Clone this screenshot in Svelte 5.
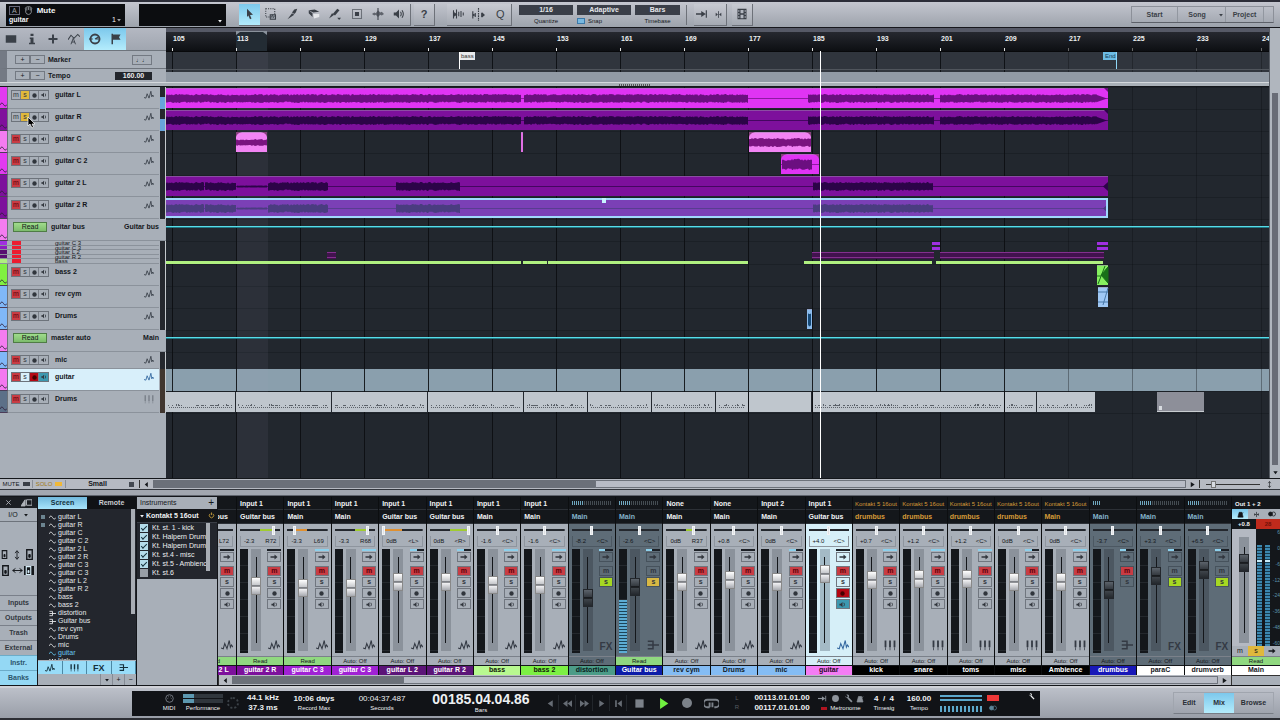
<script lang="ts">
	type Seg = [number, number, number?]; // from, to, amplitude
	type Clip = { from: number; to: number; fill: string; wave?: string; segs?: Seg[]; fade?: boolean; line?: boolean; tail?: 'taper' | 'notch' };
	type Track = {
		name: string;
		color: string;
		kind?: 'audio' | 'bus' | 'midi';
		out?: string;
		muted?: boolean;
		solo?: boolean;
		armed?: boolean;
		selected?: boolean;
		short?: boolean;
		level?: boolean;
		clips?: Clip[];
	};

	const PX_PER_BAR = 8.0075;
	let windowWidth = $state(1280);
	const barX = (bar: number) => Math.floor(6 + (bar - 105) * PX_PER_BAR);
	// One grid line every 8 bars, enough to fill the window
	const bars = $derived(Array.from({ length: Math.ceil((windowWidth - 178) / 64) }, (_, i) => 105 + i * 8));
	const loopFrom = barX(113);
	const loopTo = barX(117);

	// Small deterministic noise so the waveforms never change between renders
	function noise(n: number) {
		const v = Math.sin(n * 12.9898) * 43758.5453;
		return v - Math.floor(v);
	}

	function wavePath(segs: Seg[], mid: number) {
		let d = '';
		for (const [a, b, amp = 4] of segs) {
			let top = `M${a} ${mid}`;
			let bottom = '';
			for (let x = a; x <= b; x++) {
				const up = amp * (0.75 + 0.4 * noise(x));
				const down = amp * (0.75 + 0.4 * noise(x + 500));
				top += `L${x} ${(mid - up).toFixed(1)}`;
				bottom = `L${x} ${(mid + down).toFixed(1)}` + bottom;
			}
			d += top + bottom + 'Z';
		}
		return d;
	}

	function notePath(a: number, b: number) {
		let d = '';
		for (let x = a + 2; x < b - 3; x++) {
			const r = noise(x * 3);
			if (x % 2) d += `M${x} 16.5h1`;
			if (r > 0.6) d += `M${x} 14.5h1`;
			if (r > 0.93) d += `M${x} 13.5h1`;
		}
		return d;
	}

	const full: Seg[] = [[0, 355], [358, 582], [642, 768], [774, 931]];
	const second: Seg[] = [[0, 38], [39, 70], [71, 101, 1], [102, 162], [230, 294], [647, 767]];

	const tracks: Track[] = [
		{ name: 'guitar L', color: '#e23af0', solo: true, level: true, clips: [{ from: 0, to: 942, fill: '#e034f4', wave: '#6b0f80', segs: full, line: true, tail: 'taper' }] },
		{ name: 'guitar R', color: '#80109c', solo: true, level: true, clips: [{ from: 0, to: 942, fill: '#7d109c', wave: '#2c0448', segs: full, line: true, tail: 'taper' }] },
		{ name: 'guitar C', color: '#f47cf0', muted: true, clips: [
			{ from: 70, to: 101, fill: '#f284f4', wave: '#7a1480', segs: [[70, 101, 3]], fade: true },
			{ from: 355, to: 357, fill: '#e070e4' },
			{ from: 583, to: 645, fill: '#f284f4', wave: '#7a1480', segs: [[583, 645, 4]], fade: true }
		] },
		{ name: 'guitar C 2', color: '#e23af0', muted: true, clips: [{ from: 615, to: 653, fill: '#e034f4', wave: '#6b0f80', segs: [[616, 646, 5]], fade: true, line: true }] },
		{ name: 'guitar 2 L', color: '#7d109c', muted: true, clips: [{ from: 0, to: 942, fill: '#7d109c', wave: '#2c0448', segs: second, line: true, tail: 'notch' }] },
		{ name: 'guitar 2 R', color: '#7d109c', muted: true, clips: [{ from: 0, to: 942, fill: '#7b40b6', wave: '#4a3c80', segs: second, line: true, tail: 'notch' }] },
		{ name: 'guitar bus', color: '#f47cf0', kind: 'bus', out: 'Guitar bus' }
	];

	const lowerTracks: Track[] = [
		{ name: 'bass 2', color: '#80f040', muted: true, clips: [{ from: 931, to: 942, fill: '#86f060' }] },
		{ name: 'rev cym', color: '#80b8f8', muted: true, clips: [{ from: 932, to: 942, fill: '#a0c8f4' }] },
		{ name: 'Drums', color: '#80b8f8', muted: true, clips: [{ from: 641, to: 646, fill: '#8cbcec', wave: '#164a78', segs: [[642, 645, 6]] }] },
		{ name: 'master auto', color: '#f47cf0', kind: 'bus', out: 'Main' },
		{ name: 'mic', color: '#80b8f8', muted: true, short: true },
		{ name: 'guitar', color: '#f478f0', muted: true, armed: true, selected: true },
		{ name: 'Drums', color: '#5c7088', kind: 'midi', muted: true }
	];

	const miniTracks = [
		{ name: 'guitar C 3', color: '#a030e0' },
		{ name: 'guitar C 3', color: '#8c1cc0' },
		{ name: 'guitar L 2', color: '#581070' },
		{ name: 'guitar R 2', color: '#581070' },
		{ name: 'bass', color: '#b0f080' }
	];
	const bassParts = [[0, 355], [357, 381], [382, 582], [638, 766], [770, 937]];
	const midiParts = [[0, 69], [70, 165], [166, 261], [262, 357], [358, 421], [422, 485], [486, 549], [550, 582], [583, 645], [647, 838], [839, 870], [871, 929]];

	type Channel = {
		name: string;
		src?: string;
		out: string;
		gain: string;
		pan?: number;
		color: string;
		ink?: string;
		cap: number; // fader position, 0 at the bottom
		kind?: 'audio' | 'inst' | 'fx' | 'bus';
		read?: boolean;
		muted?: boolean;
		solo?: string;
		selected?: boolean;
		level?: number;
		send: number;
	};

	const channels: Channel[] = [
		{ name: 'guitar 2 L', src: ' ', out: 'Guitar bus', gain: '', pan: -72, color: '#7d109c', cap: 56, read: true, muted: true, send: 0 },
		{ name: 'guitar 2 R', src: 'Input 1', out: 'Guitar bus', gain: '-2.3', pan: 72, color: '#7d109c', cap: 56, read: true, muted: true, send: 0 },
		{ name: 'guitar C 3', src: 'Input 1', out: 'Main', gain: '-3.3', pan: -69, color: '#a022d4', cap: 54, read: true, muted: true, send: 14 },
		{ name: 'guitar C 3', src: 'Input 1', out: 'Main', gain: '-3.3', pan: 68, color: '#a022d4', cap: 54, muted: true, send: 14 },
		{ name: 'guitar L 2', src: 'Input 1', out: 'Guitar bus', gain: '0dB', pan: -100, color: '#5c1478', cap: 60, muted: true, send: 7 },
		{ name: 'guitar R 2', src: 'Input 1', out: 'Guitar bus', gain: '0dB', pan: 100, color: '#5c1478', cap: 60, muted: true, send: 7 },
		{ name: 'bass', src: 'Input 1', out: 'Main', gain: '-1.6', color: '#b8f890', ink: '#12200a', cap: 57, muted: true, send: 14 },
		{ name: 'bass 2', src: 'Input 1', out: 'Main', gain: '-1.6', color: '#7cf044', ink: '#12200a', cap: 57, muted: true, send: 14 },
		{ name: 'distortion', out: 'Main', gain: '-8.2', color: '#4c9c88', ink: '#0a201c', cap: 44, kind: 'fx', solo: '#a6d822', send: 6 },
		{ name: 'Guitar bus', out: 'Main', gain: '-2.6', color: '#0c1ca8', cap: 55, kind: 'bus', read: true, solo: '#d8b844', level: 53, send: 6 },
		{ name: 'rev cym', src: 'None', out: 'Main', gain: '0dB', pan: 37, color: '#84bcf4', ink: '#101a26', cap: 60, muted: true, send: 0 },
		{ name: 'Drums', src: 'None', out: 'Main', gain: '+0.8', color: '#84bcf4', ink: '#101a26', cap: 62, muted: true, send: 0 },
		{ name: 'mic', src: 'Input 2', out: 'Main', gain: '0dB', color: '#84bcf4', ink: '#101a26', cap: 60, muted: true, send: 7 },
		{ name: 'guitar', src: 'Input 1', out: 'Guitar bus', gain: '+4.0', color: '#f47cf4', ink: '#240a26', cap: 68, muted: true, selected: true, send: 0 },
		{ name: 'kick', src: 'Kontakt 5 16out', out: 'drumbus', gain: '+0.7', color: '#000', cap: 62, kind: 'inst', muted: true, send: 14 },
		{ name: 'snare', src: 'Kontakt 5 16out', out: 'drumbus', gain: '+1.2', color: '#000', cap: 63, kind: 'inst', muted: true, send: 14 },
		{ name: 'toms', src: 'Kontakt 5 16out', out: 'drumbus', gain: '+1.2', color: '#000', cap: 63, kind: 'inst', muted: true, send: 14 },
		{ name: 'misc', src: 'Kontakt 5 16out', out: 'drumbus', gain: '0dB', color: '#000', cap: 60, kind: 'inst', muted: true, send: 7 },
		{ name: 'Ambience', src: 'Kontakt 5 16out', out: 'Main', gain: '0dB', color: '#000', cap: 60, kind: 'inst', muted: true, send: 14 },
		{ name: 'drumbus', out: 'Main', gain: '-3.7', color: '#1818b8', cap: 52, kind: 'bus', muted: true, send: 6 },
		{ name: 'paraC', out: 'Main', gain: '+3.3', color: '#fff', ink: '#14171b', cap: 66, kind: 'fx', solo: '#a6d822', send: 6 },
		{ name: 'drumverb', out: 'Main', gain: '+6.5', color: '#fff', ink: '#14171b', cap: 72, kind: 'fx', solo: '#a6d822', send: 6 }
	];

	function panText(pan = 0) {
		if (pan === 0) return '<C>';
		if (Math.abs(pan) === 100) return pan < 0 ? '<L>' : '<R>';
		return (pan < 0 ? 'L' : 'R') + Math.abs(pan);
	}

	function panFill(pan = 0) {
		const pos = 50 + pan * 0.46;
		const lo = Math.min(50, pos);
		const hi = Math.max(50, pos);
		return `--lo:${lo}%;--hi:${hi}%;--tint:${pan < 0 ? '#e09030' : '#a0cc30'}`;
	}

	const bankItems = ['guitar L', 'guitar R', 'guitar C', 'guitar C 2', 'guitar 2 L', 'guitar 2 R', 'guitar C 3', 'guitar C 3', 'guitar L 2', 'guitar R 2', 'bass', 'bass 2', 'distortion', 'Guitar bus', 'rev cym', 'Drums', 'mic', 'guitar', 'kick'];
	const outputs = $state([
		{ name: 'Kt. st. 1 - kick', on: true },
		{ name: 'Kt. Halpern Drums', on: true },
		{ name: 'Kt. Halpern Drums', on: true },
		{ name: 'Kt. st.4 - misc', on: true },
		{ name: 'Kt. st.5 - Ambience', on: true },
		{ name: 'Kt. st.6', on: false }
	]);
	const editTools = ['arrow', 'range', 'split', 'erase', 'paint', 'muteTool', 'bend', 'listen'];
	const sideTabs = ['Inputs', 'Outputs', 'Trash', 'External', 'Instr.', 'Banks'];
	const navButtons = ['prev', 'rewind', 'forward', 'next', 'toStart'];
</script>

<svelte:window bind:innerWidth={windowWidth} />

{#snippet icon(name: string, size = 12)}
	<svg class="icon" width={size} height={size} viewBox="0 0 16 16" fill="none" stroke="currentColor" stroke-width="1.4" aria-hidden="true">
		{#if name === 'arrow'}
			<path d="M4 1l8 8-4 .3L10 14l-2 1-2.200-5L4 12z" fill="currentColor" stroke="none" />
		{:else if name === 'range'}
			<path d="M1 1h12v11H1z" stroke-dasharray="1.500 1.500" /><path d="M7 9h7v6H7z" fill="#9aa1aa" /><path d="M8 13l2-4 1 4 2-3" stroke-width="1" />
		{:else if name === 'split'}
			<path d="M2 15L8 7l3 2z" fill="currentColor" stroke="none" /><path d="M8 6l3-4 4-1-2 5-2 2z" fill="currentColor" stroke="none" />
		{:else if name === 'erase'}
			<path d="M1 3l8-1 6 3-8 1zM1 3v4l5 5V7z" fill="currentColor" stroke="none" /><path d="M7 8h8v4l-7 2z" fill="#e4e6ea" stroke="none" />
		{:else if name === 'paint'}
			<path d="M0 14l4-7 3 2z" fill="currentColor" stroke="none" /><path d="M5 8l6-7 3 2-6 7z" fill="currentColor" stroke="none" /><path d="M11 13h5l-2.500 3z" fill="currentColor" stroke="none" />
		{:else if name === 'muteTool'}
			<path d="M2 2h12v12H2z" opacity=".6" /><path d="M6 6h4v4H6z" fill="currentColor" />
		{:else if name === 'bend'}
			<path d="M8 0v16" /><path d="M0 8l3-2 2 1 3-4 3 3 2-1 3 3-3 2-2-1-3 3-3-3-2 1z" fill="currentColor" stroke="none" opacity=".7" />
		{:else if name === 'listen'}
			<path d="M1 6h3l4-4v12l-4-4H1z" fill="currentColor" stroke="none" /><path d="M10 5q2 3 0 6M12 3q3.500 5 0 10" />
		{:else if name === 'speaker'}
			<path d="M1 6h3l4-4v12l-4-4H1z" fill="currentColor" stroke="none" /><path d="M11 4q3 4 0 8" stroke-width="2" />
		{:else if name === 'strip'}
			<path d="M2 3v11M6 2v12M9 5v6M12 4v8M15 6v4" /><path d="M2 6l4 2.500L2 11z" fill="currentColor" />
		{:else if name === 'quant'}
			<path d="M1 4v9M4 6v5M12 6v5" /><path d="M8 0v16" stroke-dasharray="2 1" /><path d="M12 5l4 3.500-4 3.500zM1 7l4 1.500L1 10z" fill="currentColor" stroke="none" />
		{:else if name === 'film'}
			<path d="M2 1h12v14H2z" fill="currentColor" stroke="none" /><path d="M6 2.500h4v4.500H6zM6 9h4v4.500H6zM3 3h1.500v2H3zM3 7h1.500v2H3zM3 11h1.500v2H3zM11.500 3H13v2h-1.500zM11.500 7H13v2h-1.500zM11.500 11H13v2h-1.500z" fill="#b4b8c1" stroke="none" />
		{:else if name === 'flow'}
			<path d="M0 8h8" stroke-width="2" /><path d="M7 4l6 4-6 4zM13 3h1.500v10H13z" fill="currentColor" stroke="none" />
		{:else if name === 'follow'}
			<path d="M8 2v12" /><path d="M3 5l4 3-4 3zM13 5L9 8l4 3z" fill="currentColor" stroke="none" />
		{:else if name === 'list'}
			<path d="M1 3h14v10H1z" fill="currentColor" stroke="none" />
		{:else if name === 'info'}
			<path d="M6 1h4v3H6zM5 6h5v7h2v2H4v-2h2V8H5z" fill="currentColor" stroke="none" />
		{:else if name === 'plus'}
			<path d="M8 2v12M2 8h12" stroke-width="2.600" />
		{:else if name === 'auto'}
			<path d="M0 9l4-6 4 4 5-5 3 3" /><path d="M4 15l3-8 3 8M5 12h4" stroke-width="1.200" />
		{:else if name === 'dial'}
			<circle cx="8" cy="8" r="6" stroke-width="2.500" /><path d="M8 8l5-3M8 8h5M0 8h5" stroke-width="1.500" />
		{:else if name === 'hand'}
			<path d="M3 7q-2-4 1-5 4-2 8 0 3 1 1 5v4q-1 4-5 4t-5-4zM5 3v5M8 2v5M11 3v5" />
		{:else if name === 'flag'}
			<path d="M3 1v14" stroke-width="2" /><path d="M4 2h10l-2 3.500L14 9H4z" fill="currentColor" stroke="none" />
		{:else if name === 'wave'}
			<path d="M0 12l3 1 2-7 3 7 3-11 1.500 9L14 8l2 3" />
		{:else if name === 'keys'}
			<path d="M2 2v9M8 2v9M14 2v9" stroke-width="2.400" /><path d="M2 11v4M8 11v4M14 11v4" stroke-width="1" />
		{:else if name === 'bus'}
			<path d="M1 3h7v10H1M1 8h15" stroke-width="2" />
		{:else if name === 'send'}
			<path d="M1 8h10" stroke-width="3" /><path d="M9 3l6 5-6 5z" fill="currentColor" stroke="none" />
		{:else if name === 'dot'}
			<circle cx="8" cy="8" r="5" fill="currentColor" stroke="none" />
		{:else if name === 'sine'}
			<path d="M0 9q4-8 8-1t8 0" stroke-width="2" />
		{:else if name === 'prev'}
			<path d="M12 2v12L3 8z" fill="currentColor" stroke="none" />
		{:else if name === 'next'}
			<path d="M4 2v12l9-6z" fill="currentColor" stroke="none" />
		{:else if name === 'rewind'}
			<path d="M8 2v12L0 8zM16 2v12L8 8z" fill="currentColor" stroke="none" />
		{:else if name === 'forward'}
			<path d="M0 2v12l8-6zM8 2v12l8-6z" fill="currentColor" stroke="none" />
		{:else if name === 'toStart'}
			<path d="M2 2h3v12H2zM14 2v12L6 8z" fill="currentColor" stroke="none" />
		{:else if name === 'stop'}
			<path d="M2 2h12v12H2z" fill="currentColor" stroke="none" />
		{:else if name === 'play'}
			<path d="M3 0v16l12-8z" fill="currentColor" stroke="none" />
		{:else if name === 'loop'}
			<path d="M6 12H3.500a3 3 0 010-8h9a3 3 0 010 8H11M9 12V7M6 7v5" stroke-width="2" />
		{:else if name === 'wrench'}
			<path d="M14 14L7 7" stroke-width="3" /><path d="M2 3l3 3 2-2-3-3q4-1 5 2 0 3-2 4-4 1-5-4z" fill="currentColor" stroke="none" />
		{:else if name === 'metro'}
			<path d="M5 3h6l3 11H2zM7 12l7-9" fill="currentColor" />
		{:else if name === 'midi'}
			<circle cx="8" cy="8" r="5.500" /><path d="M5 8h1M10 8h1M6 5.500h1M9 5.500h1" />
		{:else if name === 'down'}
			<path d="M3 5h10l-5 7z" fill="currentColor" stroke="none" />
		{:else if name === 'left'}
			<path d="M11 2v12L4 8z" fill="currentColor" stroke="none" />
		{:else if name === 'vert'}
			<path d="M8 2v12M5 5l3-4 3 4M5 11l3 4 3-4" />
		{:else if name === 'horiz'}
			<path d="M1 8h14M5 5L1 8l4 3M11 5l4 3-4 3" />
		{:else if name === 'narrow'}
			<path d="M4 1h8v14H4z" stroke-width="2" /><path d="M7 8h2v4H7z" fill="currentColor" />
		{:else if name === 'power'}
			<path d="M5 4a5 5 0 106 0M8 1v6" stroke-width="2" />
		{:else if name === 'stereo'}
			<circle cx="5" cy="8" r="4" fill="currentColor" /><circle cx="11" cy="8" r="4" />
		{:else if name === 'close'}
			<path d="M3 3l10 10M13 3L3 13" stroke-width="2" />
		{:else if name === 'window'}
			<path d="M0 13l6-9v9z" fill="currentColor" /><path d="M8 4h8v8H8z" />
		{/if}
	</svg>
{/snippet}

{#snippet grid(h: number)}
	<rect x={loopFrom} y="0" width={loopTo - loopFrom} height={h} fill="#aab" opacity=".08" />
	{#each bars as bar}
		<rect x={barX(bar)} y="0" width="1" height={h} fill="#0c0e12" opacity={bar > 210 ? 0.35 : 0.9} />
	{/each}
{/snippet}

{#snippet trackRow(t: Track)}
	<div class="track" class:selected={t.selected} class:short={t.short}>
		<div class="strip" style="background:{t.color}">{@render icon('sine', 7)}</div>
		<div class="head" class:wide={t.kind === 'bus'}>
			{#if t.kind === 'bus'}
				<button class="read">Read</button>
				<span class="name">{t.name}</span>
				<span class="out">{t.out}</span>
			{:else}
				<div class="msrm">
					<button class:red={t.muted} aria-label="Mute {t.name}">m</button>
					<button class:yellow={t.solo} aria-label="Solo {t.name}">s</button>
					<button class:rec={t.armed} aria-label="Record {t.name}">{@render icon('dot', 7)}</button>
					<button class:mon={t.armed} aria-label="Monitor {t.name}">{@render icon('speaker', 6)}</button>
				</div>
				<span class="name">{t.name}</span>
				<span class="kind" class:faint={t.kind === 'midi'}>{@render icon(t.kind === 'midi' ? 'keys' : 'wave', 10)}</span>
			{/if}
		</div>
		{#if t.kind !== 'bus'}
			<div class="peak" class:lit={t.level} class:brown={t.selected || t.kind === 'midi'}></div>
		{/if}
		<svg class="lane" height={t.short ? 17 : 22}>
			{@render grid(22)}
			{#each t.clips ?? [] as c}
				<rect x={c.from} y="1" width={c.to - c.from} height="20" fill={c.fill} />
				<rect x={c.from} y="1" width={c.to - c.from} height="1" fill="#9a8aa8" opacity=".5" />
				{#if c.line}<rect x={c.from} y="11" width={c.to - c.from} height="1" fill={c.wave} opacity=".7" />{/if}
				{#if c.segs}<path d={wavePath(c.segs, 11.5)} fill={c.wave} />{/if}
				{#if c.fade}
					<path d="M{c.from} 1h6q-5 1-6 5zM{c.to} 1h-6q5 1 6 5z" fill="#86407c" />
				{/if}
				{#if c.tail === 'taper'}
					<path d="M931 8l10 3.500-10 3.500zM938 1h4v4z" fill={c.wave} />
				{:else if c.tail === 'notch'}
					<path d="M942 7l-5 4.500 5 4.500z" fill={c.wave} />
				{/if}
			{/each}
			{#if t.name === 'guitar 2 R'}
				<rect x="-2" y="2" width="943" height="18" fill="none" stroke="#a0d8fc" stroke-width="2" />
				<rect x="436" y="1" width="4" height="5" fill="#c8f4ff" />
			{:else if t.name === 'bass 2'}
				<path d="M942 3l-7 8 7 8zM931 12h4M932 20l7-18" fill="#187018" stroke="#187018" />
			{:else if t.name === 'rev cym'}
				<path d="M942 2l-5 17M932 16h10M932 6h10" stroke="#4878a8" fill="none" />
			{:else if t.kind === 'bus'}
				<rect x="0" y="7" width="100%" height="1" fill="#58dce8" />
				<rect x="0" y="8" width="100%" height="1" fill="#207884" />
			{:else if t.kind === 'midi'}
				{#each midiParts as [a, b]}
					<rect x={a} y="1" width={b - a} height="20" fill="#bfc6cd" />
					{#if a !== 583}<path d={notePath(a, b)} stroke="#5c626a" />{/if}
				{/each}
				<rect x="991" y="1" width="47" height="20" fill="#8d8f99" />
				<rect x="991" y="20" width="47" height="1" fill="#c8ccd0" />
				<rect x="993" y="15" width="3" height="4" fill="#d8dce0" />
			{/if}
		</svg>
	</div>
{/snippet}

{#snippet channel(c: Channel)}
	{@const dark = c.kind === 'fx' || c.kind === 'bus'}
	<section class="channel" class:dark class:picked={c.selected} aria-label={c.name}>
		<div class="io src" class:gold={c.kind === 'inst'}>
			{#if c.src}{c.src}{:else}<i class="ticks" class:half={c.name === 'drumbus'}></i>{/if}
		</div>
		<div class="io dest" class:gold={c.kind === 'inst'}>{c.out}</div>
		<input class="pan" type="range" min="-100" max="100" value={c.pan ?? 0} style={panFill(c.pan)} aria-label="Pan {c.name}" />
		<div class="vals"><span>{c.gain}</span><span>{panText(c.pan)}</span></div>
		<div class="body">
			<div class="meter"><i style="height:{c.level ?? 0}px"></i></div>
			<input class="fader" type="range" min="0" max="84" value={c.cap} aria-label="Volume {c.name}" />
			<div class="btns">
				<i class="send" style="--send:{c.send}px"></i>
				<button aria-label="Sends">{@render icon('send', 8)}</button>
				<button class="mute" class:red={c.muted} aria-label="Mute">m</button>
				<button class:lit={c.solo} style={c.solo ? `background:${c.solo}` : undefined} aria-label="Solo">s</button>
				{#if !dark}
					<button class:rec={c.selected} aria-label="Record">{@render icon('dot', 7)}</button>
					<button class:mon={c.selected} aria-label="Monitor">{@render icon('speaker', 7)}</button>
				{/if}
				<span class="type">
					{#if c.kind === 'fx'}FX{:else}{@render icon(c.kind === 'inst' ? 'keys' : c.kind === 'bus' ? 'bus' : 'wave', 12)}{/if}
				</span>
			</div>
		</div>
		<button class="automode" class:on={c.read}>{c.read ? 'Read' : 'Auto: Off'}</button>
		<div class="label" style="background:{c.color};color:{c.ink ?? '#fff'}">{c.name}</div>
	</section>
{/snippet}

<div class="app">
	<header class="toolbar">
		<div class="param">
			<div class="line"><span class="badge">A</span>{@render icon('hand', 9)}<b>Mute</b></div>
			<div class="line small"><b>guitar</b><span>1{@render icon('down', 6)}</span></div>
		</div>
		<div class="param second"><span>{@render icon('down', 6)}</span></div>
		<div class="tools edit">
			{#each editTools as tool, i}
				<button class:active={i === 0} aria-label={tool}>{@render icon(tool, 12)}</button>
			{/each}
		</div>
		<button class="tools help" aria-label="Help">?</button>
		<div class="tools trio">
			<button aria-label="Strip silence">{@render icon('strip', 12)}</button>
			<button aria-label="Quantize">{@render icon('quant', 13)}</button>
			<button aria-label="Macros">Q</button>
		</div>
		<div class="picks">
			<label><select><option>1/16</option></select>Quantize</label>
			<div class="pick"><select aria-label="Snap mode"><option>Adaptive</option></select><label class="snap"><input type="checkbox" checked />Snap</label></div>
			<label class="slim"><select><option>Bars</option></select>Timebase</label>
		</div>
		<div class="tools duo">
			<button aria-label="Autoscroll">{@render icon('flow', 12)}</button>
			<button aria-label="Cursor follows">{@render icon('follow', 9)}</button>
		</div>
		<button class="tools film" aria-label="Video">{@render icon('film', 12)}</button>
		<nav class="pages">
			<button>Start</button><button class="song">Song</button><button class="drop" aria-label="Songs">{@render icon('down', 6)}</button><button>Project</button>
		</nav>
	</header>

	<main class="arrange">
		<div class="timeline">
			<div class="top">
				<div class="left">
					<div class="views">
						{#each ['list', 'info', 'plus', 'auto', 'dial', 'flag'] as v, i}
							<button class:active={i > 3} aria-label={v}>{@render icon(v, 12)}</button>
						{/each}
					</div>
					<div class="global">
						<span class="pm"><button>+</button><button>−</button></span><b>Marker</b><span class="notes">♩♩</span>
					</div>
					<div class="global tempo">
						<span class="pm"><button>+</button><button>−</button></span><b>Tempo</b><span class="bpm">160.00</span>
					</div>
				</div>
				<div class="right">
					<svg class="ruler" height="23">
						<path d="M{loopFrom} 4h31v19h-31z" fill="#232c34" />
						<path d="M{loopFrom} 3h31v4l-4-3h-23l-4 3z" fill="#8a929c" />
						{#each bars as bar}
							<text x={barX(bar) + 1} y="13">{bar}</text>
							<rect x={barX(bar)} y="20" width="1" height="3" fill={bar > 210 ? '#666' : '#ddd'} />
						{/each}
					</svg>
					<svg class="markers" height="21">
						{@render grid(21)}
						<rect x="0" y="17" width="100%" height="1" fill="#50555c" />
						<rect x="293" y="0" width="1" height="17" fill="#fff" />
						<rect x="294" y="0" width="15" height="8" fill="#e8eaec" />
						<text x="295" y="6" fill="#333">bass</text>
						<rect x="937" y="0" width="14" height="8" fill="#6cbce4" />
						<rect x="950" y="0" width="1" height="17" fill="#90d8f8" />
						<text x="939" y="6" fill="#123a54">End</text>
					</svg>
					<div class="tempolane"></div>
				</div>
			</div>
			<div class="splitter"><i></i></div>
			<div class="tracks">
				{#each tracks as t}{@render trackRow(t)}{/each}
				<div class="track minis">
					<div class="ministack">
						{#each miniTracks as m}
							<div class="mini"><i style="background:{m.color}"></i><em></em><span>{m.name}</span></div>
						{/each}
					</div>
					<div class="peak"></div>
					<svg class="lane" height="23">
						{@render grid(23)}
						{#each [[766, 774], [931, 942]] as [a, b]}
							<path d="M{a} 1h{b - a}v3h{a - b}zM{a} 6h{b - a}v3h{a - b}z" fill="#a030e0" />
						{/each}
						{#each [[646, 768], [774, 938], [161, 170]] as [a, b]}
							<rect x={a} y="11" width={b - a} height="7" fill="#42124e" />
							<path d="M{a} 11.500h{b - a}M{a} 16.500h{b - a}" stroke="#84308e" />
						{/each}
						{#each bassParts as [a, b]}
							<rect x={a} y="20" width={b - a} height="3" fill="#b0f080" />
						{/each}
					</svg>
				</div>
				{#each lowerTracks as t}{@render trackRow(t)}{/each}
				<div class="track rest">
					<div class="blank"></div>
					<svg class="lane">{@render grid(2000)}</svg>
				</div>
			</div>
			<div class="playhead"></div>
			<svg class="pointer" width="9" height="13" viewBox="0 0 9 13"><path d="M1 1v9l2-2 2 4 1.500-1L5 8h3z" fill="#000" stroke="#fff" stroke-width=".7" /></svg>
		</div>
		<div class="vscroll"><i></i>{@render icon('down', 7)}</div>
	</main>

	<div class="statusbar">
		<button class="flat">MUTE <i></i></button>
		<button class="flat solo">SOLO <i></i></button>
		<select aria-label="Track height"><option>Small</option></select>
		<span class="sq"></span>
		<div class="hscroll">{@render icon('left', 7)}<div class="rail"><i></i></div>{@render icon('next', 7)}</div>
		<input class="zoom" type="range" value="10" aria-label="Zoom" />
		<span class="corner">{@render icon('vert', 7)}</span>
	</div>
	<div class="gap"></div>

	<section class="mixer">
		<aside class="side">
			<div class="close"><button aria-label="Close">{@render icon('close', 7)}</button><button aria-label="Detach">{@render icon('window', 11)}</button></div>
			<button class="iobtn">I/O{@render icon('down', 6)}</button>
			<div class="sizes">
				{@render icon('narrow', 9)}{@render icon('vert', 10)}{@render icon('narrow', 11)}
				{@render icon('narrow', 11)}{@render icon('horiz', 11)}<span class="inv">{@render icon('narrow', 9)}</span>
			</div>
			{#each sideTabs as tab, i}
				<button class="sidetab" class:active={i > 3}>{tab}</button>
			{/each}
		</aside>

		<div class="banks">
			<div class="tabs"><button class="active">Screen</button><button>Remote</button></div>
			<div class="banklist">
				<ul>
					{#each bankItems as b, i}
						<li class:cur={i === 17}>
							<i class:vis={i < 2}></i>{@render icon(i === 13 || i === 12 ? 'bus' : i === 18 ? 'keys' : 'sine', 7)}{b}
						</li>
					{/each}
				</ul>
				<span class="bar"></span>
			</div>
			<div class="filters">
				<button aria-label="Audio">{@render icon('wave', 10)}</button><button aria-label="Instruments">{@render icon('keys', 9)}</button><button>FX</button><button aria-label="Buses">{@render icon('bus', 9)}</button>
			</div>
			<div class="bankfoot"><button aria-label="Bank">{@render icon('down', 6)}</button><button>+</button><button>−</button></div>
		</div>

		<div class="instruments">
			<div class="title"><span>Instruments</span><button>+</button></div>
			<div class="device"><span>{@render icon('down', 6)} Kontakt 5 16out</span><em>{@render icon('power', 7)}</em></div>
			<div class="outs">
				{#each outputs as o}
					<label><input type="checkbox" bind:checked={o.on} /><span>{o.name}</span></label>
				{/each}
			</div>
		</div>

		<div class="console">
			<div class="channels">
				{#each channels as c}{@render channel(c)}{/each}
			</div>
			<div class="hscroll mix">{@render icon('left', 7)}<div class="rail"><i></i></div>{@render icon('next', 7)}</div>
		</div>

		<section class="master" aria-label="Main">
			<div class="outname">Out 1 + 2</div>
			<div class="modes"><button class="active" aria-label="Metronome">{@render icon('metro', 7)}</button><button aria-label="Mono">{@render icon('follow', 7)}</button><button aria-label="Stereo">{@render icon('stereo', 8)}</button></div>
			<div class="peaks"><span>+0.8</span><span class="clip">28</span></div>
			<div class="mbody">
				<input class="fader" type="range" min="0" max="84" value="68" aria-label="Volume Main" />
				<div class="bars"><i></i><i></i></div>
				<div class="scale"><span>6</span><span>0</span><span>-6</span><span>-12</span><span>-24</span><span>-36</span><span>-48</span><span>-60</span></div>
			</div>
			<div class="modes ms"><button>m</button><button class="yellow">s</button><button aria-label="Sends">{@render icon('send', 8)}</button></div>
			<button class="automode on">Read</button>
			<div class="label">Main</div>
			<div class="foot"></div>
		</section>
	</section>

	<footer class="transport">
		<div class="lcd">
			<div class="cell midi">{@render icon('midi', 11)}<small>MIDI</small></div>
			<div class="cell perf"><span class="load"><i></i><i></i></span><small>Performance</small></div>
			<div class="cell ring"><i></i></div>
			<div class="cell rate"><b>44.1 kHz</b><b>37.3 ms</b></div>
			<div class="cell days"><b>10:06 days</b><small>Record Max</small></div>
			<div class="cell secs"><span>00:04:37.487</span><small>Seconds</small></div>
			<div class="cell pos"><strong>00185.04.04.86</strong><small>Bars</small></div>
			<div class="nav">
				{#each navButtons as n}<button aria-label={n}>{@render icon(n, 9)}</button>{/each}
			</div>
			<div class="play">
				<button aria-label="Stop">{@render icon('stop', 11)}</button>
				<button class="go" aria-label="Play">{@render icon('play', 11)}</button>
				<button aria-label="Record">{@render icon('dot', 16)}</button>
				<button aria-label="Loop">{@render icon('loop', 15)}</button>
			</div>
			<div class="cell lr"><small>L</small><small>R</small></div>
			<div class="cell loc"><b>00113.01.01.00</b><b>00117.01.01.00</b></div>
			<div class="cell metro"><span>{@render icon('flow', 9)}{@render icon('dot', 11)}{@render icon('wrench', 9)}{@render icon('metro', 8)}</span><span class="click"><i></i><small>Metronome</small></span></div>
			<div class="cell sig"><b>4 &nbsp;/&nbsp; 4</b><small>Timesig</small></div>
			<div class="cell bpmcell"><b>160.00</b><small>Tempo</small></div>
			<div class="cell levels"><i class="l1"></i><i class="l2"></i></div>
			<div class="cell over"><i></i>{@render icon('stereo', 8)}</div>
			<div class="wr">{@render icon('wrench', 7)}</div>
		</div>
		<nav class="panes"><button>Edit</button><button class="active">Mix</button><button>Browse</button></nav>
	</footer>
</div>

<style>
	:global(body) {
		margin: 0;
		background: #14161a;
	}

	.app {
		display: flex;
		flex-direction: column;
		min-height: 100vh;
		font-family: 'Liberation Sans', Arial, sans-serif;
		font-size: 7px;
		line-height: 8px;
		color: #14171b;
		background: #14161a;
		cursor: default;
	}

	.app * {
		box-sizing: border-box;
	}

	button,
	select,
	input {
		font: inherit;
		color: inherit;
		margin: 0;
		padding: 0;
		border: 0;
		border-radius: 0;
		background: none;
		appearance: none;
	}

	button {
		display: flex;
		align-items: center;
		justify-content: center;
	}

	i,
	em {
		font-style: normal;
	}

	.icon {
		display: block;
		flex: none;
	}

	/* Toolbar */
	.toolbar {
		display: flex;
		align-items: center;
		height: 28px;
		padding: 0 6px;
		border-top: 2px solid #2c2d38;
		border-bottom: 1px solid #16171c;
		background: linear-gradient(#c4c6cf, #9da3ac);
		color: #3a3f47;
	}

	.param {
		width: 119px;
		height: 22px;
		padding: 2px 3px;
		background: #0c0d10;
		color: #f2f4f6;
	}

	.param .line {
		display: flex;
		align-items: center;
		gap: 4px;
		height: 10px;
		font-size: 8px;
	}

	.param .line .icon {
		color: #a0a4aa;
	}

	.param .small {
		justify-content: space-between;
		height: 8px;
		font-size: 7px;
	}

	.param span {
		display: flex;
		align-items: center;
	}

	.param .badge {
		padding: 0 2px;
		border: 1px solid #667;
		color: #a0a4aa;
		font-size: 7px;
		line-height: 7px;
	}

	.param.second {
		display: flex;
		align-items: flex-end;
		justify-content: flex-end;
		width: 87px;
		margin: 0 13px 0 14px;
	}

	.tools {
		display: flex;
		height: 22px;
		border-right: 1px solid #6d7179;
		border-bottom: 1px solid #6d7179;
		background: linear-gradient(#c8cad2, #a4a9b2);
	}

	.tools button {
		flex: 1;
	}

	.active,
	.tools .active {
		background: linear-gradient(#7cc8ec, #b4ecfc);
	}

	.edit {
		width: 172px;
	}

	.help {
		width: 21px;
		margin: 0 12px 0 3px;
		font-size: 11px;
		font-weight: bold;
	}

	.trio {
		width: 65px;
		margin-right: 7px;
	}

	.trio button {
		font-size: 11px;
	}

	.picks {
		display: flex;
		gap: 4px;
		padding-right: 6px;
		margin-right: 7px;
		border-right: 1px solid #6d7179;
		color: #14171b;
		font-size: 6px;
		text-align: center;
	}

	.picks select {
		display: block;
		width: 54px;
		height: 10px;
		margin-bottom: 2px;
		background: #3a3e48;
		color: #e4e6ea;
		font-size: 7px;
		font-weight: bold;
		text-align: center;
		text-align-last: center;
	}

	.picks .slim select {
		width: 45px;
	}

	.snap {
		display: flex;
		align-items: center;
		gap: 3px;
	}

	.snap input {
		width: 8px;
		height: 6px;
		border: 1px solid #3a78a8;
		background: #78b8e0;
	}

	.duo {
		width: 33px;
		margin-right: 5px;
	}

	.film {
		width: 21px;
	}

	.pages {
		display: flex;
		height: 17px;
		margin-left: auto;
		padding-right: 9px;
		border: 1px solid #8c9099;
		border-bottom-color: #5c6068;
		font-weight: bold;
	}

	.pages button {
		width: 46px;
		border-right: 1px solid #9297a0;
	}

	.pages .song {
		width: 38px;
		border-right: 0;
	}

	.pages .drop {
		width: 10px;
	}

	.pages button:last-child {
		width: 38px;
	}

	/* Arrange view */
	.arrange {
		display: flex;
		flex: 1;
		background: #22272e;
	}

	.timeline {
		position: relative;
		display: flex;
		flex: 1;
		flex-direction: column;
		min-width: 0;
	}

	.top {
		display: flex;
	}

	.left {
		width: 166px;
		background: #a8afb8;
	}

	.views {
		display: flex;
		height: 23px;
		border-bottom: 1px solid #6e747c;
		background: linear-gradient(#b4b8c2, #a0a6b0);
	}

	.views button {
		width: 21px;
		color: #3a4048;
	}

	.global {
		display: flex;
		align-items: center;
		height: 18px;
		padding: 0 14px 0 8px;
		border-left: 7px solid #747a84;
		border-bottom: 1px solid #6e747c;
	}

	.global.tempo {
		height: 13px;
		border-bottom: 0;
	}

	.global b {
		margin-left: 3px;
	}

	.pm {
		display: flex;
	}

	.pm button {
		width: 15px;
		height: 9px;
		border: 1px solid #737982;
	}

	.notes,
	.bpm {
		width: 20px;
		margin-left: auto;
		border: 1px solid #737982;
		font-size: 6px;
		text-align: center;
	}

	.bpm {
		width: 37px;
		border: 0;
		background: #23262c;
		color: #e8eaee;
		font-size: 7px;
		font-weight: bold;
	}

	.right {
		flex: 1;
		min-width: 0;
	}

	.ruler,
	.markers {
		display: block;
		width: 100%;
	}

	.ruler {
		background: linear-gradient(#565966 4px, #26282f 4px, #0d0f13);
		fill: #eef0f2;
		font-weight: bold;
	}

	.markers {
		border-top: 1px solid #08090b;
		background: #30353d;
		font-size: 6px;
	}

	.tempolane {
		height: 10px;
		background: #919aa5;
	}

	.splitter {
		display: flex;
		height: 5px;
		align-items: center;
		justify-content: center;
		border-top: 1px solid #d4d8dc;
		border-bottom: 1px solid #14171b;
		background: #aab1b8;
	}

	.splitter i {
		width: 32px;
		height: 2px;
		background: repeating-linear-gradient(90deg, #555 0 1px, transparent 1px 2px);
	}

	.tracks {
		display: flex;
		flex: 1;
		flex-direction: column;
	}

	.track {
		display: flex;
		height: 22px;
	}

	.short {
		height: 17px;
	}

	.strip {
		display: flex;
		align-items: flex-end;
		width: 8px;
		border-right: 1px solid #6c727a;
		border-bottom: 1px solid #4c3c58;
		color: #30203c;
	}

	.head {
		display: flex;
		align-items: flex-start;
		width: 151px;
		padding: 3px 5px 0 3px;
		border-bottom: 1px solid #8b929b;
		background: #a8afb8;
	}

	.head.wide {
		width: 158px;
		padding: 3px 7px 0 5px;
	}

	.selected .head {
		background: #d8effa;
	}

	.msrm {
		display: flex;
		border: 1px solid #6d737b;
		color: #30353c;
	}

	.msrm button {
		width: 9px;
		height: 8px;
		border-right: 1px solid #7b818a;
	}

	.msrm button:last-child {
		border-right: 0;
	}

	.head .name {
		margin: 1px 0 0 6px;
		font-weight: bold;
		white-space: nowrap;
	}

	.head.wide .name {
		margin-left: 4px;
	}

	.head .out {
		margin: 1px 0 0 auto;
		font-weight: bold;
	}

	.kind {
		margin-left: auto;
		color: #3c424b;
	}

	.selected .kind {
		color: #3468a0;
	}

	.faint {
		opacity: 0.4;
	}

	.read {
		width: 34px;
		height: 10px;
		border: 1px solid #4f7c46;
		background: linear-gradient(#a0dc8c, #7cbc6c);
	}

	.red,
	.msrm .red {
		background: #c83c44;
		color: #5c0008;
	}

	.yellow,
	.msrm .yellow {
		background: #e0b83c;
	}

	.msrm .rec,
	.btns .rec {
		background: #b40814;
		color: #400;
	}

	.msrm .mon,
	.btns .mon {
		background: #3c98b0;
	}

	.peak {
		width: 7px;
		border-right: 1px solid #c4c8cc;
		border-left: 1px solid #a8afb8;
		background: #25282e;
	}

	.peak.lit {
		background: linear-gradient(#25282e 10px, #68a4dc 10px);
	}

	.peak.brown {
		background: #40362f;
	}

	.lane {
		display: block;
		flex: 1;
		min-width: 0;
		height: 100%;
		background: linear-gradient(#1b2026 1px, #22272e 1px);
	}

	.selected .lane {
		background: #8a9fad;
	}

	.minis {
		height: 23px;
	}

	.ministack {
		display: flex;
		flex-direction: column;
		width: 159px;
		background: #a8afb8;
	}

	.mini {
		display: flex;
		flex: 1;
		min-height: 0;
		border-bottom: 1px solid #8b929b;
		font-size: 6px;
		line-height: 5px;
	}

	.mini i {
		width: 7px;
		margin-right: 5px;
	}

	.mini em {
		width: 9px;
		margin-right: 34px;
		background: #ec1c30;
	}

	.mini span {
		height: 5px;
	}

	.rest {
		flex: 1;
		min-height: 40px;
	}

	.blank {
		width: 166px;
		background: #a8afb8;
	}

	.rest .lane {
		height: auto;
		contain: size;
	}

	.playhead {
		position: absolute;
		top: 23px;
		bottom: 0;
		left: 820px;
		width: 1px;
		background: #fff;
	}

	.pointer {
		position: absolute;
		top: 88px;
		left: 27px;
	}

	.vscroll {
		display: flex;
		flex-direction: column;
		align-items: center;
		width: 11px;
		padding: 55px 2px 2px;
		border-left: 1px solid #555a62;
		background: #b0b6be;
	}

	.vscroll i {
		flex: 1;
		width: 6px;
		margin: 10px 0 4px;
		background: #686c76;
	}

	/* Status bar under the arrangement */
	.statusbar {
		display: flex;
		align-items: center;
		height: 12px;
		border-top: 1px solid #14171b;
		border-bottom: 1px solid #33373e;
		background: #b6bac2;
	}

	.flat {
		gap: 3px;
		width: 33px;
		border-right: 1px solid #8a8f98;
		font-size: 6px;
	}

	.flat i {
		width: 7px;
		height: 4px;
		background: #3a3e46;
	}

	.solo {
		color: #a07818;
	}

	.solo i {
		background: #f0b838;
	}

	.statusbar select {
		width: 63px;
		font-weight: bold;
		text-align: center;
		text-align-last: center;
	}

	.sq {
		width: 5px;
		height: 5px;
		margin-right: 5px;
		background: #444951;
	}

	.hscroll {
		display: flex;
		align-items: center;
		flex: 1;
		gap: 3px;
		padding: 0 3px;
		border-left: 1px solid #333;
		border-right: 1px solid #333;
	}

	.rail {
		flex: 1;
		height: 8px;
		padding-left: 42%;
		background: #6b7079;
	}

	.rail i {
		display: block;
		height: 8px;
		border: 1px solid #6d727b;
		border-radius: 1px;
		background: #b8bcc6;
	}

	.zoom {
		width: 54px;
		height: 8px;
		margin: 0 6px;
		background: linear-gradient(#333, #333) center / 100% 1px no-repeat;
	}

	.zoom::-webkit-slider-thumb {
		appearance: none;
		width: 5px;
		height: 7px;
		border: 1px solid #777;
		background: #d8dce2;
	}

	.corner {
		width: 14px;
	}

	.gap {
		height: 6px;
		border-bottom: 1px solid #60656e;
		background: #a2a7b0;
	}

	/* Mixer */
	.mixer {
		display: flex;
		align-items: stretch;
		padding: 1px 0;
	}

	.side {
		display: flex;
		flex-direction: column;
		width: 37px;
		margin-right: 1px;
		background: #a8afb8;
	}

	.close {
		display: flex;
		justify-content: space-around;
		height: 11px;
		background: #1c1f24;
		color: #b0b4ba;
	}

	.iobtn {
		gap: 5px;
		height: 14px;
		border-bottom: 1px solid #6d737b;
	}

	.sizes {
		display: grid;
		grid-template-columns: repeat(3, 12px);
		align-content: center;
		align-items: center;
		flex: 1;
		row-gap: 5px;
		padding-top: 8px;
	}

	.inv {
		width: 10px;
		background: #14171b;
		color: #d8effa;
	}

	.sidetab {
		height: 15px;
		border-top: 1px solid #7a808a;
		color: #333840;
		font-weight: bold;
	}

	.sidetab.active {
		border-color: #6cacc8;
		background: #94d8f4;
		color: #2c566c;
	}

	.banks {
		display: flex;
		flex-direction: column;
		width: 98px;
		margin-right: 1px;
		background: #a8afb8;
	}

	.tabs {
		display: flex;
		height: 12px;
	}

	.tabs button {
		flex: 1;
		background: #101216;
		color: #c8ccd0;
		font-weight: bold;
	}

	.tabs .active {
		background: linear-gradient(#70b8dc, #a8e4fc);
		color: #14303c;
	}

	.banklist {
		display: flex;
		flex: 1 1 0px;
		contain: size;
		overflow: hidden;
		padding-top: 4px;
		background: #23262d;
		color: #e6e8ea;
	}

	ul {
		flex: 1;
		margin: 0;
		padding: 0;
		list-style: none;
	}

	li {
		display: flex;
		align-items: center;
		height: 8px;
		gap: 2px;
		padding-left: 3px;
	}

	li i {
		width: 4px;
		height: 4px;
		margin-right: 2px;
	}

	li .vis {
		background: #6c8490;
	}

	.cur {
		color: #68c8f0;
	}

	.bar {
		width: 4px;
		height: 105px;
		margin: -4px 1px 0 0;
		background: #a8adb4;
	}

	.filters {
		display: flex;
		height: 13px;
		margin-top: 1px;
	}

	.filters button {
		flex: 1;
		border-right: 1px solid #4c88a4;
		background: #98dcf8;
		color: #14303c;
		font-size: 9px;
		font-weight: bold;
	}

	.bankfoot {
		display: flex;
		height: 11px;
		justify-content: flex-end;
	}

	.bankfoot button {
		width: 12px;
		border-left: 1px solid #858b94;
	}

	.instruments {
		width: 80px;
		margin-right: 1px;
		background: #a8afb8;
	}

	.title,
	.device {
		display: flex;
		align-items: center;
		justify-content: space-between;
		height: 12px;
		padding: 0 3px;
		white-space: nowrap;
	}

	.title button {
		font-size: 10px;
	}

	.device {
		height: 14px;
		padding: 0 2px;
		border-bottom: 1px solid #3a3e46;
		background: #14161a;
		color: #f0f2f4;
		font-weight: bold;
	}

	.device span {
		display: flex;
		align-items: center;
		gap: 1px;
	}

	.device em {
		color: #c09838;
	}

	.outs {
		display: flex;
		flex-direction: column;
		padding: 0 0 2px 3px;
		background: linear-gradient(#a8adb4, #a8adb4) right 7px top 0 / 4px 48px no-repeat #23262d;
		color: #eef0f2;
	}

	.outs label {
		display: flex;
		align-items: center;
		gap: 4px;
		height: 9px;
		white-space: nowrap;
	}

	.outs span {
		width: 54px;
		overflow: hidden;
	}

	.outs input {
		width: 8px;
		height: 8px;
		background: #989ea6;
	}

	.outs input:checked {
		background: #b4dcea;
	}

	.outs input:checked::after {
		content: '';
		display: block;
		width: 5px;
		height: 2px;
		margin: 2px 1px;
		border: solid #14303c;
		border-width: 0 0 1px 1px;
		rotate: -45deg;
	}

	.console {
		display: flex;
		flex: 1;
		flex-direction: column;
		min-width: 0;
	}

	.channels {
		display: flex;
	}

	.channel {
		display: flex;
		flex: 1 1 0;
		flex-direction: column;
		min-width: 0;
		overflow: hidden;
		border-right: 1px solid #0c0e10;
		background: #a8afb8;
	}

	/* First strip is scrolled most of the way out on the left */
	.channel:first-child {
		flex: 0 0 19px;
		align-items: flex-end;
	}

	.channel:first-child > * {
		flex-shrink: 0;
		width: 46px;
	}

	.channel:first-child .pan {
		width: 38px;
	}

	.channel:first-child .vals {
		width: 39px;
	}

	.dark {
		background: #5e6c77;
	}

	.picked {
		background: #d6eff8;
	}

	.io {
		height: 13px;
		padding: 3px 0 0 3px;
		overflow: hidden;
		border-bottom: 1px solid #2c3036;
		background: #14171b;
		color: #f0f2f4;
		font-weight: bold;
		white-space: nowrap;
	}

	.dest {
		height: 14px;
	}

	.dark .io {
		color: #84b4cc;
	}

	.io.gold {
		padding-left: 2px;
		color: #d49a38;
	}

	.src.gold {
		font-size: 6px;
		font-weight: normal;
	}

	.ticks {
		display: block;
		width: 40px;
		height: 4px;
		margin-top: 1px;
		background: repeating-linear-gradient(90deg, transparent 0 1px, #14171b 1px 2px), linear-gradient(90deg, #70a8c0 12px, #444c52 12px);
	}

	.half {
		width: 8px;
	}

	.pan {
		height: 10px;
		margin: 1px 3px;
		background: linear-gradient(90deg, #24282e var(--lo), var(--tint) var(--lo) var(--hi), #24282e var(--hi)) center / 100% 2px no-repeat;
	}

	.pan::-webkit-slider-thumb {
		appearance: none;
		width: 3px;
		height: 9px;
		border: 1px solid #f2f4f6;
		background: #dfe2e6;
	}

	.vals {
		display: flex;
		align-items: center;
		justify-content: space-between;
		height: 11px;
		margin: 0 3px;
		padding: 0 3px;
		border: 1px solid #8e959e;
		border-top: 0;
		font-size: 6px;
	}

	.dark .vals {
		border-color: #4c5862;
	}

	.body {
		display: flex;
		height: 109px;
		padding: 2px 2px 3px 3px;
	}

	.meter {
		display: flex;
		align-items: flex-end;
		width: 8px;
		height: 104px;
		background: repeating-linear-gradient(#14171b 0 16px, #24282d 16px 17px);
	}

	.meter i {
		width: 100%;
		background: repeating-linear-gradient(#5cacd4 0 2px, #1c4458 2px 3px);
	}

	.fader {
		width: 10px;
		height: 102px;
		margin-left: 3px;
		writing-mode: vertical-lr;
		direction: rtl;
		background: linear-gradient(#14171b, #14171b) center / 1px 86px no-repeat, #8b929b;
	}

	.dark .fader {
		background: linear-gradient(#14171b, #14171b) center / 1px 86px no-repeat, #4c5761;
	}

	.picked .fader {
		background: linear-gradient(#14171b, #14171b) center / 1px 86px no-repeat, #a4bac6;
	}

	.fader::-webkit-slider-thumb {
		appearance: none;
		width: 10px;
		height: 18px;
		border: 1px solid #888;
		background: linear-gradient(#fff, #c4c6ca 45%, #55585e 48% 52%, #f4f4f6 55%, #a8aab0);
	}

	.dark .fader::-webkit-slider-thumb,
	.master .fader::-webkit-slider-thumb {
		border-color: #23272c;
		background: linear-gradient(#5c636b, #33383e 45%, #0a0b0d 48% 52%, #40464c 55%, #23272c);
	}

	.btns {
		display: flex;
		flex-direction: column;
		width: 14px;
		margin-left: auto;
		gap: 1px;
		color: #30353c;
	}

	.send {
		height: 2px;
		background: linear-gradient(90deg, #8cd0ec var(--send), #1c2026 var(--send));
	}

	.btns button {
		width: 14px;
		height: 10px;
		border: 1px solid #70767f;
		font-weight: bold;
	}

	.dark .btns button {
		border-color: #46525c;
	}

	.btns .mute {
		margin-top: 3px;
	}

	.type {
		margin: auto 0 2px;
		align-self: center;
		color: #343a44;
		font-size: 10px;
		font-weight: bold;
	}

	.picked .type {
		color: #3468a0;
	}

	.automode {
		height: 9px;
		border-top: 1px solid #7b818a;
		font-size: 6px;
	}

	.automode.on {
		background: #90d880;
	}

	.label {
		height: 10px;
		border-top: 1px solid #14171b;
		font-weight: bold;
		text-align: center;
		white-space: nowrap;
	}

	.mix {
		flex: none;
		height: 10px;
		background: #b6bac2;
	}

	.mix .rail {
		padding-left: 17%;
	}

	.master {
		display: flex;
		flex-direction: column;
		width: 48px;
		background: #a8afb8;
	}

	.outname {
		height: 12px;
		padding: 3px 0 0 3px;
		background: #14171b;
		color: #f0f2f4;
		font-size: 6px;
		font-weight: bold;
	}

	.modes {
		display: flex;
		height: 10px;
	}

	.modes button {
		flex: 1;
	}

	.peaks {
		display: flex;
		height: 10px;
		background: #14171b;
		color: #f0f2f4;
		font-size: 6px;
		font-weight: bold;
		text-align: center;
	}

	.peaks span {
		flex: 1;
		padding-top: 1px;
	}

	.peaks .clip {
		background: #c02a1c;
		color: #701008;
	}

	.mbody {
		display: flex;
		flex: 1;
		background: linear-gradient(90deg, #b4b9c2 24px, #14171b 24px);
	}

	.mbody .fader {
		height: 106px;
		margin: 8px 8px 0 7px;
	}

	.bars {
		display: flex;
		gap: 3px;
		width: 13px;
		padding-top: 16px;
	}

	.bars i {
		flex: 1;
		background: linear-gradient(#c8ecf8, #c8ecf8) 0 15px / 100% 2px no-repeat, repeating-linear-gradient(#3c88b0 0 2px, #173c50 2px 3px);
	}

	.scale {
		display: flex;
		flex: 1;
		flex-direction: column;
		justify-content: space-between;
		color: #5c94ac;
		font-size: 5px;
		line-height: 6px;
		text-align: right;
	}

	.master .label {
		background: #fff;
	}

	.foot {
		height: 10px;
		border-top: 1px solid #333;
	}

	/* Transport */
	.transport {
		display: flex;
		align-items: center;
		height: 34px;
		padding: 0 6px 0 132px;
		border-top: 2px solid #d0d2d8;
		border-bottom: 2px solid #2c2e34;
		background: linear-gradient(#bcc0c9, #999ea8);
	}

	.lcd {
		display: flex;
		align-items: center;
		width: 908px;
		height: 25px;
		padding-left: 24px;
		background: #111317;
		color: #eef0f2;
		font-size: 8px;
		line-height: 10px;
		white-space: nowrap;
	}

	.cell {
		display: flex;
		flex-direction: column;
		align-items: center;
		justify-content: center;
	}

	.cell small {
		font-size: 6px;
		line-height: 9px;
	}

	.midi {
		width: 26px;
	}

	.midi .icon {
		color: #70767e;
	}

	.perf {
		width: 42px;
	}

	.load {
		display: flex;
		flex-direction: column;
		gap: 1px;
		padding: 1px 0;
	}

	.load i {
		width: 40px;
		height: 4px;
		background: linear-gradient(90deg, #5c98b0 11px, #30363c 11px);
	}

	.ring {
		width: 18px;
	}

	.ring i {
		width: 12px;
		height: 12px;
		border: 2px dotted #3c4248;
		border-radius: 50%;
	}

	.rate {
		width: 42px;
	}

	.days {
		width: 60px;
	}

	.secs {
		width: 76px;
	}

	.pos {
		width: 122px;
	}

	.pos strong {
		font-size: 14px;
		line-height: 14px;
	}

	.nav {
		display: flex;
		color: #666c74;
	}

	.nav button {
		width: 17px;
		height: 16px;
		border-right: 1px solid #22262b;
	}

	.play {
		display: flex;
		color: #7c828a;
	}

	.play button {
		width: 24px;
	}

	.play .go {
		color: #70f040;
	}

	.lr {
		width: 28px;
		color: #555b62;
	}

	.loc {
		width: 62px;
	}

	.metro {
		width: 56px;
		color: #8c929a;
	}

	.metro span {
		display: flex;
		align-items: center;
		gap: 3px;
	}

	.metro small {
		color: #eef0f2;
	}

	.metro .click i {
		width: 6px;
		height: 3px;
		background: #b01420;
	}

	.sig {
		width: 30px;
	}

	.bpmcell {
		width: 40px;
	}

	.levels {
		width: 44px;
		gap: 5px;
	}

	.levels i {
		width: 42px;
		height: 6px;
	}

	.levels .l1 {
		background: linear-gradient(#5ca8cc 2px, #14171b 2px 4px, #5ca8cc 4px);
	}

	.levels .l2 {
		background: repeating-linear-gradient(90deg, #5ca8cc 0 2px, #14171b 2px 4px);
	}

	.over {
		width: 20px;
		gap: 3px;
		color: #5c8498;
	}

	.over i {
		width: 12px;
		height: 6px;
		background: #f03838;
	}

	.wr {
		align-self: flex-start;
		margin: 2px 5px 0 auto;
	}

	.panes {
		display: flex;
		height: 22px;
		margin-left: auto;
		border: 1px solid #a0a5ae;
		border-bottom-color: #777c85;
		font-weight: bold;
	}

	.panes button {
		width: 30px;
		color: #2b2f36;
	}

	.panes button:last-child {
		width: 39px;
	}
</style>
